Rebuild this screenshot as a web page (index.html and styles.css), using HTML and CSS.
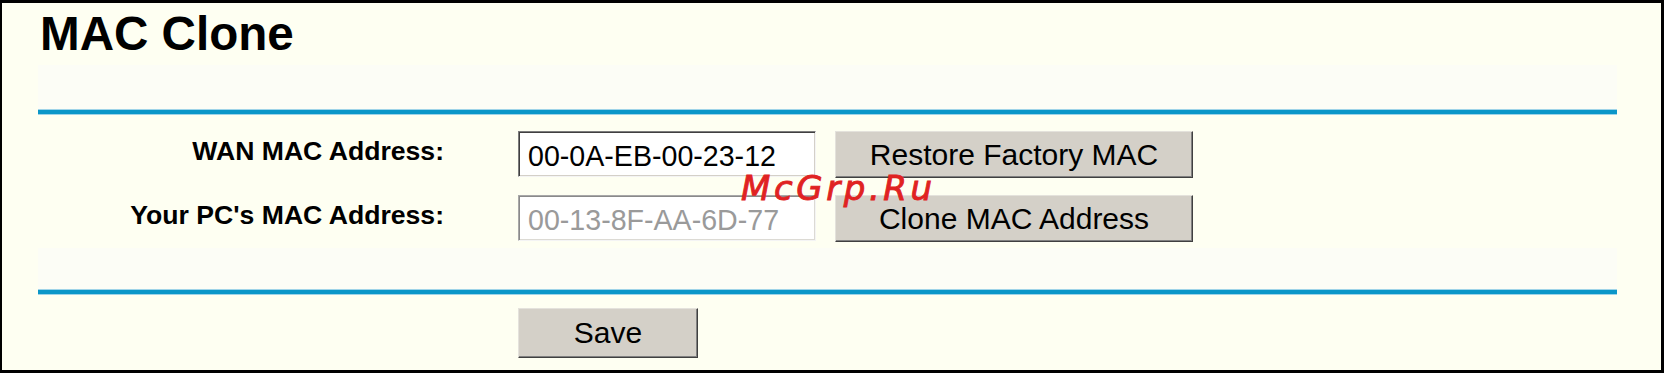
FILE: index.html
```html
<!DOCTYPE html>
<html>
<head>
<meta charset="utf-8">
<title>MAC Clone</title>
<link rel="stylesheet" href="styles.css">
</head>
<body>
<div class="page">
  <h1 class="title">MAC Clone</h1>
  <div class="band band-top"></div>
  <div class="rule"></div>
  <div class="form">
    <div class="row">
      <label class="label" for="wan">WAN MAC Address:</label>
      <input class="field" id="wan" type="text" value="00-0A-EB-00-23-12">
      <button class="btn btn-wide" type="button">Restore Factory MAC</button>
    </div>
    <div class="row">
      <label class="label" for="pc">Your PC's MAC Address:</label>
      <input class="field field-off" id="pc" type="text" value="00-13-8F-AA-6D-77" disabled>
      <button class="btn btn-wide" type="button">Clone MAC Address</button>
    </div>
  </div>
  <div class="band band-bottom"></div>
  <div class="rule"></div>
  <div class="actions">
    <button class="btn btn-save" type="button">Save</button>
  </div>
  <div class="watermark">McGrp.Ru</div>
</div>
</body>
</html>
```
FILE: styles.css
```css
html, body {
  margin: 0;
  padding: 0;
  background: #000;
}
.page {
  position: relative;
  box-sizing: border-box;
  width: 1664px;
  height: 373px;
  border: 3px solid #000;
  border-left-width: 2px;
  background: #fefff2;
  padding: 0 44px 0 36px;
  font-family: "Liberation Sans", Arial, sans-serif;
  color: #000;
}
.title {
  margin: 0;
  padding: 5px 0 0 2px;
  font-size: 47.6px;
  line-height: 52px;
  font-weight: bold;
}
.band {
  background: #fcfdf6;
}
.band-top {
  margin-top: 5px;
  height: 44px;
}
.band-bottom {
  height: 41px;
}
.rule {
  height: 4px;
  background: #0b97c9;
  border-top: 1px solid #9fd4e8;
  border-bottom: 1px solid #9fd4e8;
}
.form {
  display: flex;
  flex-direction: column;
  gap: 16px;
  padding: 16px 0 5px;
}
.row {
  display: grid;
  grid-template-columns: 406px 372px 377px;
  align-items: start;
  height: 48px;
}
.label {
  margin-top: 5px;
  text-align: right;
  font-size: 26.6px;
  line-height: 30px;
  font-weight: bold;
}
.field {
  margin-left: 74px;
  width: 298px;
  height: 46px;
  box-sizing: border-box;
  padding: 4px 0 0 9px;
  border: 1px solid;
  border-color: #7c7c7c #f4f4f4 #f4f4f4 #7c7c7c;
  box-shadow: inset 1px 1px 0 #404040, inset -1px -1px 0 #d4d0c8;
  background: #fff;
  font-family: "Liberation Sans", Arial, sans-serif;
  font-size: 28.6px;
  color: #000;
  outline: none;
}
.field-off {
  color: #9a9a9a;
  -webkit-text-fill-color: #9a9a9a;
  border-color: #a8a8a8 #f4f4f4 #f4f4f4 #a8a8a8;
  box-shadow: inset 1px 1px 0 #8a8a8a, inset -1px -1px 0 #dcdad4;
}
.btn {
  box-sizing: border-box;
  padding: 0;
  background: #d4d0c8;
  border: 1px solid;
  border-color: #e4e2dc #404040 #404040 #e4e2dc;
  box-shadow: inset -1px -1px 0 #808080;
  font-family: "Liberation Sans", Arial, sans-serif;
  font-size: 30px;
  color: #000;
  cursor: default;
}
.btn-wide {
  margin-left: 19px;
  width: 358px;
  height: 47px;
}
.actions {
  padding: 13px 0 0 480px;
}
.btn-save {
  width: 180px;
  height: 50px;
  display: block;
}
.watermark {
  position: absolute;
  left: 739px;
  top: 168px;
  font-family: "DejaVu Sans", sans-serif;
  font-style: italic;
  font-size: 34px;
  line-height: 34px;
  letter-spacing: 3.6px;
  color: #e02222;
  -webkit-text-stroke: 0.9px #e02222;
  pointer-events: none;
}
```
